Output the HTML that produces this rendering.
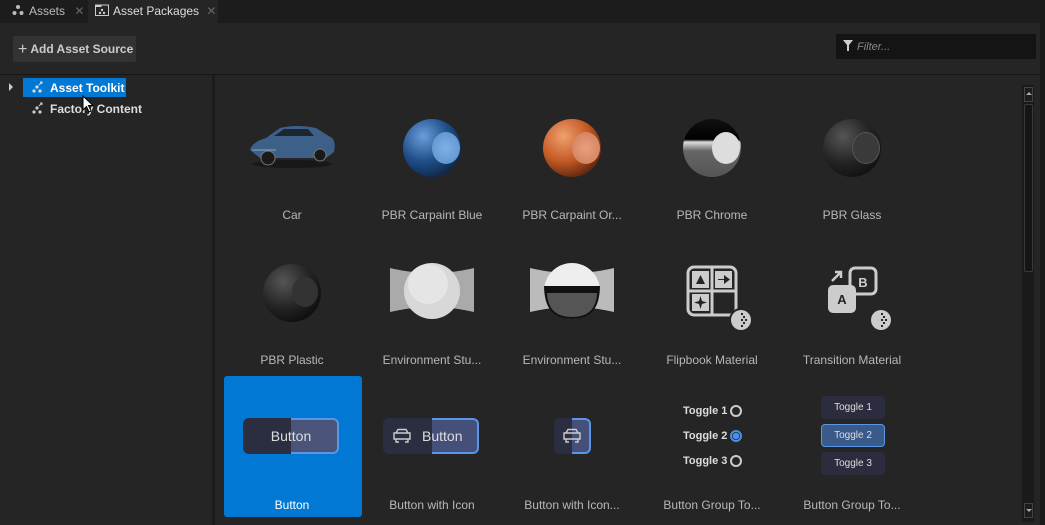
<!DOCTYPE html>
<html><head><style>
*{margin:0;padding:0;box-sizing:border-box}
body{width:1045px;height:525px;background:#252525;font-family:"Liberation Sans",sans-serif;overflow:hidden;position:relative;color:#ccc}
.a{position:absolute}
.lbl{position:absolute;width:140px;text-align:center;font-size:12px;color:#b8b8b8;white-space:nowrap}
.sph{position:absolute;width:58px;height:58px;border-radius:50%}
.cap{position:absolute;border-radius:50%}
.tg{font-size:11px;color:#ddd;font-weight:bold}
</style></head><body>
<div class="a" style="left:0;top:0;width:1045px;height:23px;background:#1c1c1c"></div>
<div class="a" style="left:12px;top:4px;font-size:12px;color:#bbb">
<svg width="12" height="12" style="vertical-align:-1px;margin-right:5px" viewBox="0 0 12 12"><circle cx="6" cy="3" r="2" fill="#bbb"/><circle cx="2.5" cy="9" r="2" fill="#bbb"/><circle cx="9.5" cy="9" r="2" fill="#bbb"/></svg>Assets <span style="color:#666;margin-left:6px">✕</span></div>
<div class="a" style="left:88px;top:0;width:130px;height:23px;background:#252525"></div>
<div class="a" style="left:95px;top:4px;font-size:12px;color:#ddd">
<svg width="14" height="12" style="vertical-align:-1px;margin-right:4px" viewBox="0 0 14 12"><rect x="0.5" y="1" width="13" height="10.5" fill="none" stroke="#ccc"/><rect x="0.5" y="1" width="6" height="2" fill="#ccc"/><circle cx="7" cy="6" r="1.2" fill="#ccc"/><circle cx="5" cy="9" r="1.2" fill="#ccc"/><circle cx="9" cy="9" r="1.2" fill="#ccc"/></svg>Asset Packages <span style="color:#666;margin-left:4px">✕</span></div>
<div class="a" style="left:13px;top:36px;width:123px;height:26px;background:#333;border-radius:2px;font-size:12px;color:#ccc;font-weight:bold;line-height:26px;padding-left:5px"><span style="font-size:16px;font-weight:normal;vertical-align:-1px;margin-right:3px">+</span>Add Asset Source</div>
<div class="a" style="left:836px;top:34px;width:200px;height:25px;background:#141414"></div>
<div class="a" style="left:843px;top:40px;font-size:11px;color:#888;font-style:italic"><svg width="10" height="11" style="vertical-align:-1px;margin-right:4px" viewBox="0 0 10 11"><path d="M0 0H10L6 5V11H4V5Z" fill="#ccc"/></svg>Filter...</div>
<div class="a" style="left:0;top:74px;width:1045px;height:1px;background:#151515"></div>
<div class="a" style="left:212px;top:75px;width:3px;height:450px;background:#1b1b1b"></div>
<div class="a" style="left:9px;top:83px;width:0;height:0;border-top:4px solid transparent;border-bottom:4px solid transparent;border-left:4px solid #ccc"></div>
<div class="a" style="left:23px;top:78px;width:103px;height:19px;background:#0078d4"></div>
<svg class="a" style="left:30px;top:80px" width="14" height="14" viewBox="0 0 14 14"><circle cx="7" cy="7" r="1.6" fill="#ddd"/><circle cx="4" cy="11" r="1.6" fill="#ddd"/><circle cx="10" cy="11" r="1.6" fill="#ddd"/><path d="M9 5L12 2M10 2H12V4" stroke="#ddd" fill="none"/></svg>
<div class="a" style="left:50px;top:81px;font-size:12px;font-weight:bold;color:#fff">Asset Toolkit</div>
<svg class="a" style="left:30px;top:101px" width="14" height="14" viewBox="0 0 14 14"><circle cx="7" cy="7" r="1.6" fill="#ccc"/><circle cx="4" cy="11" r="1.6" fill="#ccc"/><circle cx="10" cy="11" r="1.6" fill="#ccc"/><path d="M9 5L12 2M10 2H12V4" stroke="#ccc" fill="none"/></svg>
<div class="a" style="left:50px;top:102px;font-size:12px;font-weight:bold;color:#ddd">Factory Content</div>
<svg class="a" style="left:82px;top:95px" width="12" height="18" viewBox="0 0 12 18"><path d="M1 1V15L4.5 11.5L7 17L9 16L6.5 10.5H11Z" fill="#fff" stroke="#000" stroke-width="1"/></svg>
<div class="a" style="left:1022px;top:85px;width:12px;height:437px;background:#1a1a1a"></div>
<div class="a" style="left:1024px;top:87px;width:9px;height:15px;border:1px solid #444;background:#1d1d1d"></div>
<div class="a" style="left:1026px;top:92px;width:0;height:0;border-left:3px solid transparent;border-right:3px solid transparent;border-bottom:3px solid #aaa"></div>
<div class="a" style="left:1024px;top:104px;width:9px;height:168px;border:1px solid #3a3a3a;background:#151515;border-radius:2px"></div>
<div class="a" style="left:1024px;top:503px;width:9px;height:15px;border:1px solid #444;background:#1d1d1d"></div>
<div class="a" style="left:1026px;top:509px;width:0;height:0;border-left:3px solid transparent;border-right:3px solid transparent;border-top:3px solid #aaa"></div>
<div class="a" style="left:1040px;top:0;width:5px;height:525px;background:#1a1a1a"></div>
<svg class="a" style="left:246px;top:120px" width="92" height="52" viewBox="0 0 92 52"><ellipse cx="46" cy="44" rx="40" ry="4" fill="#111" opacity=".6"/><path d="M4 30Q6 22 20 18L34 8Q50 4 70 8L86 18Q90 22 88 32L80 38H14Z" fill="#3d6088"/><path d="M28 16L38 9H62L68 16Z" fill="#1c2633"/><circle cx="22" cy="38" r="7" fill="#1a1a1a" stroke="#777"/><circle cx="74" cy="35" r="6" fill="#1a1a1a" stroke="#777"/><path d="M6 30H30" stroke="#8ab" stroke-width="1"/></svg>
<div class="sph" style="left:403px;top:119px;background:radial-gradient(circle at 35% 30%,#6a9ed8,#1f4f8a 45%,#0c1f3a 85%)"></div>
<div class="cap" style="left:432px;top:132px;width:28px;height:32px;background:radial-gradient(circle,#7fb0e6,#5a8fc8)"></div>
<div class="sph" style="left:543px;top:119px;background:radial-gradient(circle at 35% 30%,#f0a070,#c45a24 45%,#4a1c08 85%)"></div>
<div class="cap" style="left:572px;top:132px;width:28px;height:32px;background:radial-gradient(circle,#e8a080,#d07a55)"></div>
<div class="sph" style="left:683px;top:119px;background:linear-gradient(#111 0,#000 35%,#ddd 40%,#666 55%,#555 100%)"></div>
<div class="cap" style="left:712px;top:132px;width:28px;height:32px;background:#ddd"></div>
<div class="sph" style="left:823px;top:119px;background:radial-gradient(circle at 35% 30%,#555,#222 50%,#0e0e0e 85%)"></div>
<div class="cap" style="left:852px;top:132px;width:28px;height:32px;background:#3a3a3a;border:1px solid #555"></div>
<div class="lbl" style="left:222px;top:208px">Car</div>
<div class="lbl" style="left:362px;top:208px">PBR Carpaint Blue</div>
<div class="lbl" style="left:502px;top:208px">PBR Carpaint Or...</div>
<div class="lbl" style="left:642px;top:208px">PBR Chrome</div>
<div class="lbl" style="left:782px;top:208px">PBR Glass</div>
<div class="sph" style="left:263px;top:264px;background:radial-gradient(circle at 35% 30%,#555,#222 50%,#0a0a0a 85%)"></div>
<div class="cap" style="left:292px;top:277px;width:26px;height:30px;background:#333"></div>
<svg class="a" style="left:388px;top:262px" width="88" height="58" viewBox="0 0 88 58"><path d="M2 6Q20 10 28 10V46Q20 46 2 50Z" fill="#aaa"/><path d="M86 6Q68 10 60 10V46Q68 46 86 50Z" fill="#aaa"/><circle cx="44" cy="29" r="28" fill="#d8d8d8"/><circle cx="40" cy="22" r="20" fill="#eee" opacity=".6"/></svg>
<svg class="a" style="left:528px;top:262px" width="88" height="58" viewBox="0 0 88 58"><path d="M2 6Q20 10 28 10V46Q20 46 2 50Z" fill="#bbb"/><path d="M86 6Q68 10 60 10V46Q68 46 86 50Z" fill="#bbb"/><circle cx="44" cy="29" r="28" fill="#eee"/><path d="M16 24H72Q72 57 44 57Q16 57 16 24Z" fill="#111"/><path d="M19 31H69Q68 55 44 55Q20 55 19 31Z" fill="#555"/></svg>
<svg class="a" style="left:686px;top:265px" width="68" height="68" viewBox="0 0 68 68"><rect x="2" y="2" width="48" height="48" rx="6" fill="none" stroke="#ccc" stroke-width="3"/><path d="M26 2V50M2 26H50" stroke="#ccc" stroke-width="3"/><rect x="6" y="6" width="17" height="17" fill="#ccc"/><rect x="29" y="6" width="17" height="17" fill="#ccc"/><rect x="6" y="29" width="17" height="17" fill="#ccc"/><path d="M10 19L14.5 10L19 19Z" fill="#252525"/><path d="M32 14H38V10L44 14.5L38 19V15H32Z" fill="#252525"/><path d="M14.5 31L16 36L21 37.5L16 39L14.5 44L13 39L8 37.5L13 36Z" fill="#252525"/><circle cx="55" cy="55" r="12" fill="#252525"/><circle cx="55" cy="55" r="10" fill="#ccc"/><g fill="#252525"><rect x="55" y="48" width="2" height="2"/><rect x="57" y="51" width="2" height="2"/><rect x="55" y="54" width="2" height="2"/><rect x="59" y="54" width="2" height="2"/><rect x="57" y="57" width="2" height="2"/><rect x="55" y="60" width="2" height="2"/></g></svg>
<svg class="a" style="left:826px;top:265px" width="68" height="68" viewBox="0 0 68 68"><rect x="24" y="3" width="26" height="26" rx="5" fill="none" stroke="#ccc" stroke-width="3"/><text x="37" y="22" font-size="13" font-weight="bold" fill="#ccc" text-anchor="middle" font-family="Liberation Sans">B</text><rect x="2" y="20" width="28" height="28" rx="5" fill="#ccc"/><text x="16" y="39" font-size="13" font-weight="bold" fill="#252525" text-anchor="middle" font-family="Liberation Sans">A</text><path d="M6 16L15 7M9 7H15V13" stroke="#ccc" stroke-width="2.5" fill="none"/><circle cx="55" cy="55" r="12" fill="#252525"/><circle cx="55" cy="55" r="10" fill="#ccc"/><g fill="#252525"><rect x="55" y="48" width="2" height="2"/><rect x="57" y="51" width="2" height="2"/><rect x="55" y="54" width="2" height="2"/><rect x="59" y="54" width="2" height="2"/><rect x="57" y="57" width="2" height="2"/><rect x="55" y="60" width="2" height="2"/></g></svg>
<div class="lbl" style="left:222px;top:353px">PBR Plastic</div>
<div class="lbl" style="left:362px;top:353px">Environment Stu...</div>
<div class="lbl" style="left:502px;top:353px">Environment Stu...</div>
<div class="lbl" style="left:642px;top:353px">Flipbook Material</div>
<div class="lbl" style="left:782px;top:353px">Transition Material</div>
<div class="a" style="left:224px;top:376px;width:138px;height:141px;background:#0078d4;border-radius:3px"></div>
<div class="a" style="left:243px;top:418px;width:50px;height:36px;border-radius:6px 0 0 6px;background:#2b2e40"></div>
<div class="a" style="left:291px;top:418px;width:48px;height:36px;border-radius:0 6px 6px 0;background:#4a5478;border:2px solid #5a96e8;border-left:none"></div>
<div class="a" style="left:243px;top:418px;width:96px;height:36px;line-height:36px;text-align:center;font-size:14px;color:#ddd">Button</div>
<div class="a" style="left:383px;top:418px;width:50px;height:36px;border-radius:6px 0 0 6px;background:#2b2e40"></div>
<div class="a" style="left:432px;top:418px;width:47px;height:36px;border-radius:0 6px 6px 0;background:#44507a;border:2px solid #5a96e8;border-left:none"></div>
<svg class="a" style="left:392px;top:428px" width="20" height="16" viewBox="0 0 20 16"><path d="M4 5L6 1.5H14L16 5M2 5H18V11H2ZM4 11V14H7M16 11V14H13" fill="none" stroke="#ccc" stroke-width="1.4"/></svg>
<div class="a" style="left:422px;top:418px;font-size:14px;line-height:36px;color:#ddd">Button</div>
<div class="a" style="left:554px;top:418px;width:19px;height:36px;border-radius:6px 0 0 6px;background:#2b2e40"></div>
<div class="a" style="left:572px;top:418px;width:19px;height:36px;border-radius:0 6px 6px 0;background:#44507a;border:2px solid #5a96e8;border-left:none"></div>
<svg class="a" style="left:562px;top:428px" width="20" height="16" viewBox="0 0 20 16"><path d="M4 5L6 1.5H14L16 5M2 5H18V11H2ZM4 11V14H7M16 11V14H13" fill="none" stroke="#ccc" stroke-width="1.4"/></svg>
<div class="a tg" style="left:683px;top:405px">Toggle 1</div>
<div class="a" style="left:730px;top:405px;width:12px;height:12px;border-radius:50%;border:2px solid #ccc"></div>
<div class="a tg" style="left:683px;top:430px">Toggle 2</div>
<div class="a" style="left:730px;top:430px;width:12px;height:12px;border-radius:50%;border:2px solid #4a90e8;background:radial-gradient(circle,#4a90e8 3px,#252525 3.5px)"></div>
<div class="a tg" style="left:683px;top:455px">Toggle 3</div>
<div class="a" style="left:730px;top:455px;width:12px;height:12px;border-radius:50%;border:2px solid #ccc"></div>
<div class="a tg" style="left:821px;top:396px;width:64px;height:23px;line-height:23px;text-align:center;background:#2b2d3f;border-radius:4px;font-weight:normal;font-size:10px">Toggle 1</div>
<div class="a tg" style="left:821px;top:424px;width:64px;height:23px;line-height:21px;text-align:center;background:#3a5a8a;border:1px solid #5a96e8;border-radius:4px;font-weight:normal;font-size:10px">Toggle 2</div>
<div class="a tg" style="left:821px;top:452px;width:64px;height:23px;line-height:23px;text-align:center;background:#2b2d3f;border-radius:4px;font-weight:normal;font-size:10px">Toggle 3</div>
<div class="lbl" style="left:222px;top:498px;color:#fff">Button</div>
<div class="lbl" style="left:362px;top:498px">Button with Icon</div>
<div class="lbl" style="left:502px;top:498px">Button with Icon...</div>
<div class="lbl" style="left:642px;top:498px">Button Group To...</div>
<div class="lbl" style="left:782px;top:498px">Button Group To...</div>
</body></html>
